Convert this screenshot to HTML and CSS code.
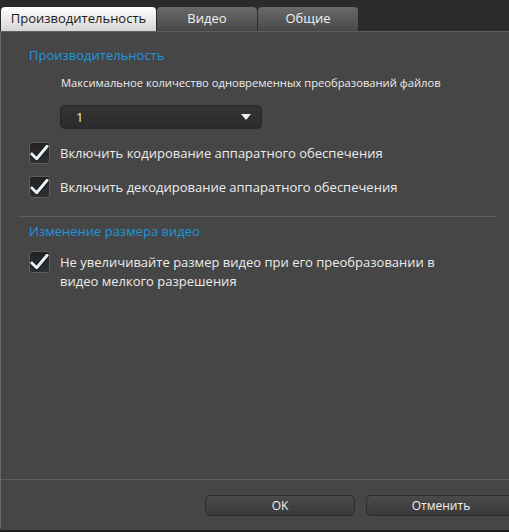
FILE: index.html
```html
<!DOCTYPE html>
<html lang="ru">
<head>
    <meta charset="UTF-8">
    <title>Настройки</title>
    <link rel="stylesheet" href="styles.css">
</head>
<body>
    <div class="window">
        <div class="tabs">
            <div class="tab active">Производительность</div>
            <div class="tab">Видео</div>
            <div class="tab">Общие</div>
        </div>

        <div class="panel">
            <div class="section">
                <h3 class="section-title">Производительность</h3>
                <div class="field-label">Максимальное количество одновременных преобразований файлов</div>
                <div class="select">
                    <span>1</span>
                    <svg class="arrow" width="10" height="6" viewBox="0 0 10 6"><path d="M0 0 L10 0 L5 6 Z" fill="#f0f0f0"/></svg>
                </div>
                <label class="check">
                    <span class="box">
                        <svg width="20" height="18" viewBox="0 0 20 18"><path d="M2 10 L7 15 L18 2" fill="none" stroke="#151515" stroke-width="5" stroke-linecap="round" stroke-linejoin="round"/><path d="M2 10 L7 15 L18 2" fill="none" stroke="#e6f2fa" stroke-width="3.2" stroke-linecap="round" stroke-linejoin="round"/></svg>
                    </span>
                    <span class="check-text">Включить кодирование аппаратного обеспечения</span>
                </label>
                <label class="check">
                    <span class="box">
                        <svg width="20" height="18" viewBox="0 0 20 18"><path d="M2 10 L7 15 L18 2" fill="none" stroke="#151515" stroke-width="5" stroke-linecap="round" stroke-linejoin="round"/><path d="M2 10 L7 15 L18 2" fill="none" stroke="#e6f2fa" stroke-width="3.2" stroke-linecap="round" stroke-linejoin="round"/></svg>
                    </span>
                    <span class="check-text">Включить декодирование аппаратного обеспечения</span>
                </label>
            </div>

            <div class="divider"></div>

            <div class="section second">
                <h3 class="section-title">Изменение размера видео</h3>
                <label class="check">
                    <span class="box">
                        <svg width="20" height="18" viewBox="0 0 20 18"><path d="M2 10 L7 15 L18 2" fill="none" stroke="#151515" stroke-width="5" stroke-linecap="round" stroke-linejoin="round"/><path d="M2 10 L7 15 L18 2" fill="none" stroke="#e6f2fa" stroke-width="3.2" stroke-linecap="round" stroke-linejoin="round"/></svg>
                    </span>
                    <span class="check-text">Не увеличивайте размер видео при его преобразовании в видео мелкого разрешения</span>
                </label>
            </div>
        </div>

        <div class="footer">
            <button class="btn">OK</button>
            <button class="btn">Отменить</button>
        </div>
    </div>
</body>
</html>
```

FILE: styles.css
```css
* {
    margin: 0;
    padding: 0;
    box-sizing: border-box;
}

body {
    font-family: "Open Sans", "Noto Sans", sans-serif;
    background-color: #2b2b2b;
    color: #ececec;
    overflow: hidden;
}

.window {
    width: 509px;
    height: 532px;
    display: flex;
    flex-direction: column;
    border-bottom: 2px solid #1e1e1e;
}

.tabs {
    display: flex;
    height: 31px;
    padding: 7px 0 0 1px;
    background-color: #2b2b2b;
}

.tab {
    width: 100px;
    height: 24px;
    margin-right: 1px;
    border-radius: 4px 4px 0 0;
    background: linear-gradient(#6a6a6a, #484848);
    color: #f2f2f2;
    font-size: 13px;
    line-height: 23px;
    text-align: center;
}

.tab.active {
    width: 155px;
    background: linear-gradient(#ffffff, #d6d6d6);
    color: #1a1a1a;
}

.panel {
    flex: 1;
    background-color: #464646;
    border-top: 1px solid #5e5e5e;
    border-left: 1px solid #6a6a6a;
}

.section {
    padding: 14px 0 0 28px;
}

.section.second {
    padding-top: 5px;
}

.section-title {
    font-weight: normal;
    font-size: 13px;
    color: #1f95dc;
    line-height: 18px;
    margin-bottom: 11px;
}

.field-label {
    font-size: 11.2px;
    line-height: 16px;
    margin-left: 32px;
    margin-bottom: 14px;
}

.select {
    width: 202px;
    height: 24px;
    margin-left: 31px;
    margin-bottom: 13px;
    padding: 0 10px 0 15px;
    display: flex;
    align-items: center;
    justify-content: space-between;
    background: linear-gradient(#343434, #2b2b2b);
    border: 1px solid #262626;
    border-radius: 5px;
    font-size: 13px;
}

.check {
    display: flex;
    align-items: flex-start;
    margin-bottom: 12px;
}

.box {
    flex: none;
    width: 21px;
    height: 22px;
    border: 1px solid #5c5c5c;
    border-radius: 3px;
    background: linear-gradient(#222222, #303030);
    display: flex;
    align-items: center;
    justify-content: center;
}

.check-text {
    font-size: 13px;
    line-height: 19px;
    padding-top: 2px;
    margin-left: 10px;
    width: 400px;
}

.divider {
    height: 1px;
    margin: 18px 13px 0 17px;
    background-color: #5e5e5e;
}

.footer {
    height: 51px;
    background-color: #464646;
    border-top: 1px solid #5e5e5e;
    border-left: 1px solid #6a6a6a;
    border-bottom-left-radius: 4px;
    display: flex;
    gap: 11px;
    padding: 15px 0 0 204px;
}

.btn {
    flex: none;
    width: 150px;
    height: 21px;
    background: linear-gradient(#4a4a4a, #3a3a3a);
    border: 1px solid #2c2c2c;
    border-radius: 5px;
    color: #f0f0f0;
    font-family: inherit;
    font-size: 12px;
}
```
